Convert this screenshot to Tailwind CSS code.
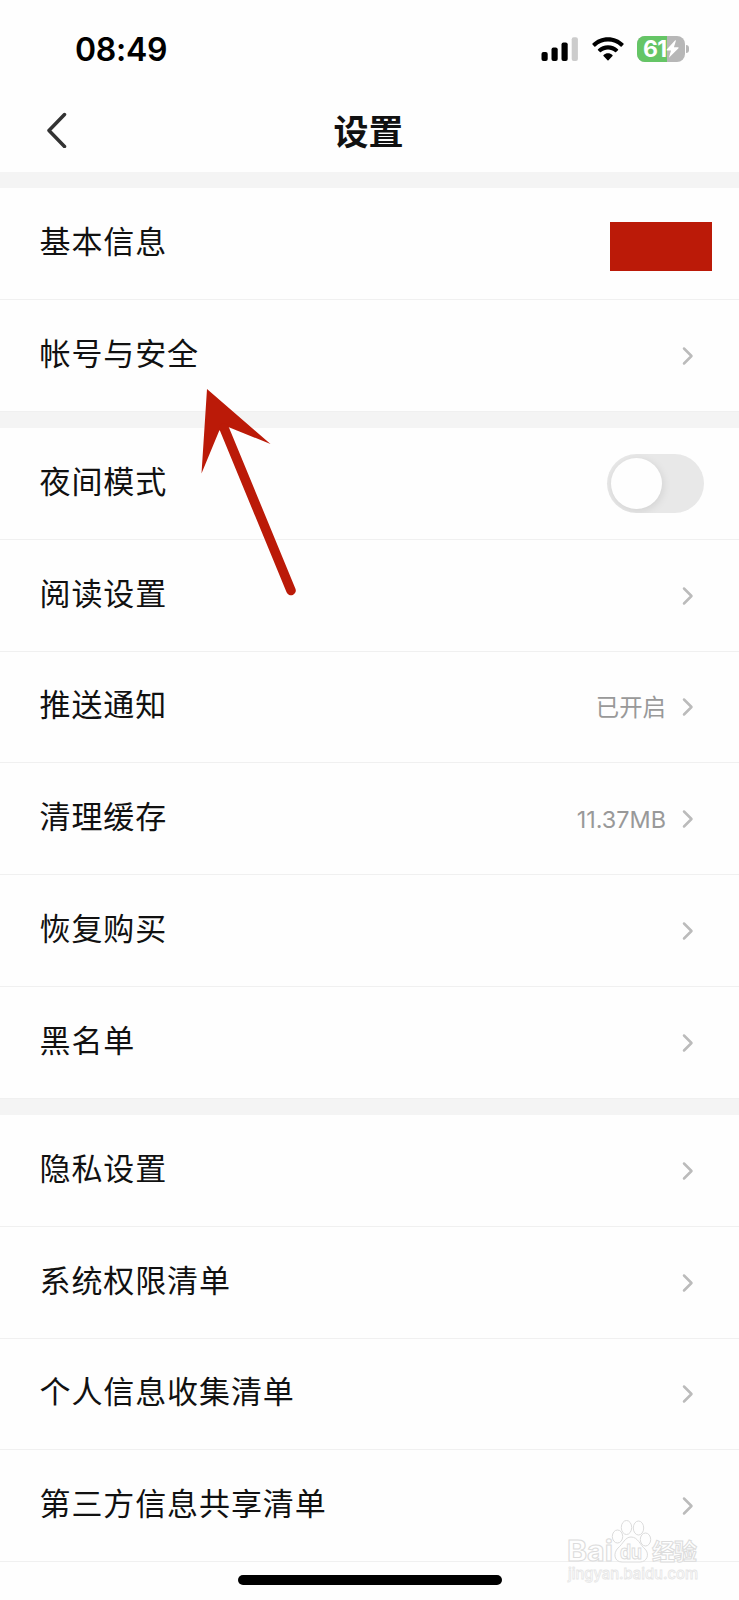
<!DOCTYPE html>
<html lang="zh-CN">
<head>
  <meta charset="UTF-8" />
  <meta name="viewport" content="width=device-width, initial-scale=1.0"/>
  <title>设置</title>
  <script src="https://cdn.jsdelivr.net/npm/@tailwindcss/browser@4"></script>
  <style>
    body {
      font-family: 'Inter', 'Noto Sans CJK SC', sans-serif;
    }
  </style>
</head>
<body class="bg-white">
  <div class="relative w-[739px] h-[1600px] overflow-hidden bg-[#fefefe] text-[#111]">

    <!-- Status Bar -->
    <div class="h-[97px] flex items-center justify-between pl-[75px] pr-[50px]">
      <span class="pt-[2px] text-[32px] leading-[40px] font-semibold tracking-[-0.3px] text-black">08:49</span>
      <div class="flex items-center pt-[1px]">
        <svg class="w-[37px] h-[26px] mr-px" viewBox="0 0 37 26">
          <rect x="0.5" y="16" width="6.2" height="9" rx="2"/>
          <rect x="10.5" y="11.5" width="6.2" height="13.5" rx="2"/>
          <rect x="20.5" y="6.5" width="6.2" height="18.5" rx="2"/>
          <rect x="30.7" y="1.3" width="6.2" height="23.7" rx="2" fill="#cccccc"/>
        </svg>
        <svg class="w-[32px] h-[26px] ml-[13px] mr-px" viewBox="0 0 32 26">
          <path d="M16 1.2C22 1.2 27.600 3.500 31.500 7.500Q32 8 31.500 8.600L29.700 10.400Q29.200 10.900 28.600 10.400C25.100 7.200 20.700 5.500 16 5.500S6.900 7.200 3.400 10.400Q2.800 10.900 2.300 10.400L0.500 8.600Q0 8 0.500 7.500C4.400 3.500 10 1.200 16 1.200Z"/>
          <path d="M16 9.300C19.800 9.300 23.300 10.700 26 13.200Q26.500 13.700 26 14.200L24.100 16.100Q23.600 16.600 23 16.100C21.100 14.400 18.600 13.500 16 13.500S10.900 14.400 9 16.100Q8.400 16.600 7.900 16.100L6 14.200Q5.500 13.700 6 13.200C8.700 10.700 12.200 9.300 16 9.300Z"/>
          <path d="M16 17.300C17.700 17.300 19.200 17.900 20.400 18.900Q21 19.400 20.500 19.900L16.500 24.300Q16 24.800 15.500 24.300L11.500 19.900Q11 19.400 11.600 18.900C12.800 17.900 14.300 17.300 16 17.300Z"/>
        </svg>
        <!-- Battery -->
        <div class="relative ml-[12px] w-[48px] h-[26px] rounded-[8px] overflow-hidden flex bg-[#b7b7b7]">
          <div class="w-[30px] h-full bg-[#65c566]"></div>
          <div class="absolute inset-0 flex items-center pl-[6px] text-white">
            <span class="text-[23px] leading-[26px] font-bold tracking-[-0.8px]">61</span>
            <svg class="w-[13px] h-[18px]" viewBox="0 0 13 18" fill="currentColor"><path d="M9.200 0.300L0.700 9.600Q0.300 10.600 1.100 10.600H5L2.900 17.800L12.500 8.200Q12.900 7.200 12.100 7.200H7.900L10 0.600Z"/></svg>
          </div>
        </div>
        <div class="ml-[1px] w-[3px] h-[8px] rounded-r-full bg-[#b7b7b7]"></div>
      </div>
    </div>

    <!-- Nav Bar -->
    <div class="h-[75px] grid grid-cols-3 items-center pl-[46px] pr-[48px] pb-[9px]">
      <svg class="w-[22px] h-[36px]" viewBox="0 0 22 36" fill="none" stroke="#333" stroke-width="3.500" stroke-linecap="round" stroke-linejoin="round"><path d="M18.500 2.500L3 18.500L18.500 34.500"/></svg>
      <h1 class="pt-[3px] text-center text-[35px] leading-[50px] font-bold">设置</h1>
    </div>

    <div id="list"></div>

    <!-- Home Indicator -->
    <div class="mt-[12.4px] mx-auto w-[264px] h-[10px] rounded-full bg-black"></div>

    <!-- Arrow -->
    <svg class="absolute left-[195px] top-[380px] w-[110px] h-[220px]" viewBox="195 380 110 220">
      <path d="M207 389L270.500 444L228.300 427L219.300 430.500L201.500 473.500Z" fill="#bb1a08"/>
      <path d="M224 428L291 590.500" stroke="#bb1a08" stroke-width="9.600" stroke-linecap="round"/>
    </svg>

    <!-- Watermark -->
    <svg class="absolute left-[560px] top-[1515px] w-[150px] h-[75px]" viewBox="560 1515 150 75" fill="#fefefe" stroke="#dcdcdc" stroke-width="1">
      <g font-family="Inter, 'Noto Sans CJK SC', sans-serif" font-weight="700">
        <text x="567" y="1561" font-size="28" textLength="46" lengthAdjust="spacingAndGlyphs">Bai</text>
        <ellipse cx="617.500" cy="1536.500" rx="5.200" ry="6.500"/>
        <ellipse cx="626.500" cy="1527.500" rx="5.200" ry="7"/>
        <ellipse cx="638.500" cy="1528" rx="5.200" ry="7"/>
        <ellipse cx="645.500" cy="1539.500" rx="5.200" ry="6.500"/>
        <path d="M631 1537C638 1537 640 1545 645 1549C650 1554 647 1562 640 1562H622C614 1562 613 1553 618 1548C623 1544 625 1537 631 1537Z"/>
        <text x="620" y="1559" font-size="20" textLength="22" lengthAdjust="spacingAndGlyphs">du</text>
        <text x="652" y="1560" font-size="23" textLength="45">经验</text>
        <text x="568" y="1579" font-size="15" stroke="#e6e6e6" stroke-width="0.800" font-weight="500" textLength="130" lengthAdjust="spacingAndGlyphs">jingyan.baidu.com</text>
      </g>
    </svg>
  </div>

  <script>
    const groups = [
      [
        { label: '基本信息', type: 'block' },
        { label: '帐号与安全' }
      ],
      [
        { label: '夜间模式', type: 'switch' },
        { label: '阅读设置' },
        { label: '推送通知', value: '已开启' },
        { label: '清理缓存', value: '11.37MB' },
        { label: '恢复购买' },
        { label: '黑名单' }
      ],
      [
        { label: '隐私设置' },
        { label: '系统权限清单' },
        { label: '个人信息收集清单' },
        { label: '第三方信息共享清单' }
      ]
    ];

    const chevron = '<svg class="w-[12px] h-[20px] mr-[45px] mt-[1px]" viewBox="0 0 12 20" fill="none" stroke="#bbbbbb" stroke-width="2.500" stroke-linecap="round" stroke-linejoin="round"><path d="M2 2.500L9.500 10L2 17.500"/></svg>';

    function right(row) {
      if (row.type === 'block') {
        return '<div class="w-[102px] h-[49px] mr-[27px] mt-[6px] bg-[#bb1a08]"></div>';
      }
      if (row.type === 'switch') {
        return `<div class="w-[97px] h-[59px] mr-[35px] mt-[1px] rounded-full bg-[#e8e8e8] flex items-center pl-[4px] overflow-hidden">
          <div class="w-[51px] h-[51px] rounded-full bg-[#fefefe] shadow-[1px_2px_8px_rgba(0,0,0,0.1)]"></div>
        </div>`;
      }
      const value = row.value ? `<span class="mr-[16px] mt-[3px] text-[23.400px] leading-[34px] text-[#999]">${row.value}</span>` : '';
      return value + chevron;
    }

    let html = '';
    groups.forEach(rows => {
      html += '<div class="h-[16.2px] bg-[#f4f4f4]"></div>';
      rows.forEach(row => {
        html += `<div class="h-[111.8px] flex items-center border-b border-[#f0f0f0] pl-[39.500px]">
          <span class="flex-1 pb-[3px] text-[31px] leading-[44px] tracking-[0.9px]">${row.label}</span>
          ${right(row)}
        </div>`;
      });
    });
    document.getElementById('list').innerHTML = html;
  </script>
</body>
</html>
